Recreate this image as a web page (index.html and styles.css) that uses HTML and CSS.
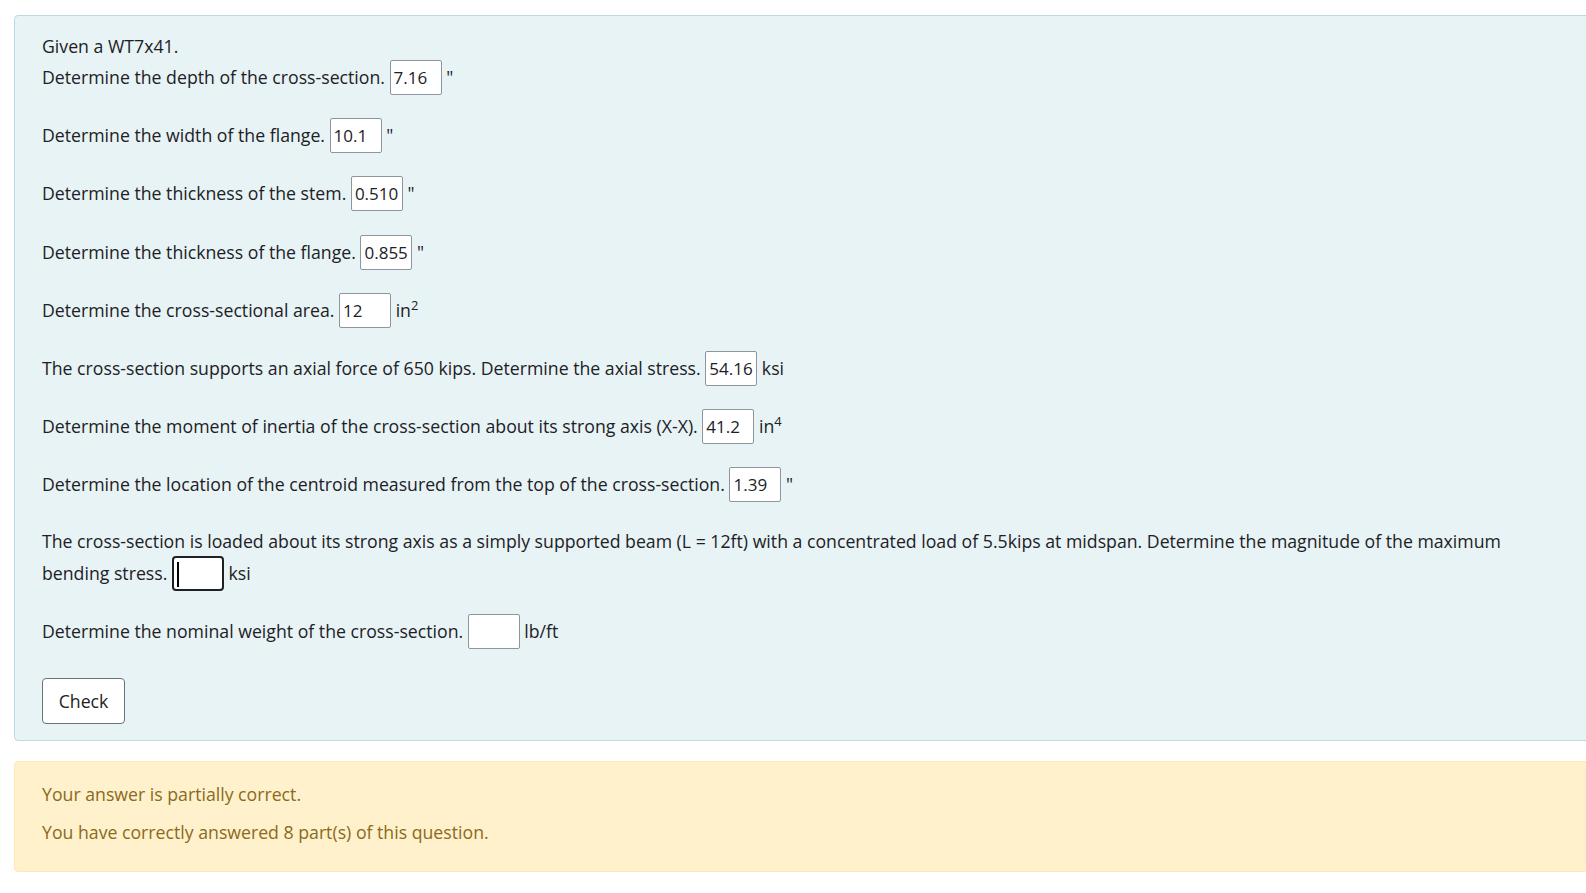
FILE: index.html
```html
<!DOCTYPE html>
<html lang="en">
<head>
    <meta charset="UTF-8">
    <title>Question</title>
    <link rel="stylesheet" href="styles.css">
</head>
<body>
    <div class="que">
        <div class="formulation">
            <p class="intro">Given a WT7x41.</p>
            <p class="part">Determine the depth of the cross-section. <input class="answer" type="text" value="7.16"> <span class="unit">"</span></p>
            <p class="part">Determine the width of the flange. <input class="answer" type="text" value="10.1"> <span class="unit">"</span></p>
            <p class="part">Determine the thickness of the stem. <input class="answer" type="text" value="0.510"> <span class="unit">"</span></p>
            <p class="part">Determine the thickness of the flange. <input class="answer" type="text" value="0.855"> <span class="unit">"</span></p>
            <p class="part">Determine the cross-sectional area. <input class="answer" type="text" value="12"> in<sup>2</sup></p>
            <p class="part">The cross-section supports an axial force of 650 kips. Determine the axial stress. <input class="answer" type="text" value="54.16"> ksi</p>
            <p class="part">Determine the moment of inertia of the cross-section about its strong axis (X-X). <input class="answer" type="text" value="41.2"> in<sup>4</sup></p>
            <p class="part">Determine the location of the centroid measured from the top of the cross-section. <input class="answer" type="text" value="1.39"> <span class="unit">"</span></p>
            <p class="part">The cross-section is loaded about its strong axis as a simply supported beam (L = 12ft) with a concentrated load of 5.5kips at midspan. Determine the magnitude of the maximum bending stress. <span class="focus-wrap"><input class="answer focused" type="text" value=""></span> ksi</p>
            <p class="part">Determine the nominal weight of the cross-section. <input class="answer" type="text" value=""> lb/ft</p>
            <div class="actions">
                <button class="btn-check" type="button">Check</button>
            </div>
        </div>
        <div class="outcome">
            <p>Your answer is partially correct.</p>
            <p>You have correctly answered 8 part(s) of this question.</p>
        </div>
    </div>
</body>
</html>
```

FILE: styles.css
```css
body {
    margin: 0;
    padding: 15px 0 0 14px;
    font-family: "Open Sans", "Noto Sans", sans-serif;
    font-size: 17.7px;
    color: #1d2125;
    background-color: #fff;
    overflow: hidden;
}

p {
    margin: 0;
}

.que {
    width: 1620px;
}

.formulation {
    background-color: #e7f3f5;
    border: 1px solid #b8dce2;
    border-radius: 4px;
    padding: 16px 27px 16px 27px;
    color: #1d2125;
}

.intro {
    line-height: 28px;
}

.part {
    line-height: 30px;
    margin-bottom: 23.2px;
    max-width: 1480px;
}

.answer {
    width: 52px;
    height: 35px;
    box-sizing: border-box;
    padding: 0 3px;
    border: 1px solid #8f959e;
    border-radius: 2px;
    background: #fff;
    font-family: inherit;
    font-size: 17px;
    color: #1d2125;
    outline: none;
}

.answer.focused {
    border: 2px solid #1d2125;
    border-radius: 4px;
}

.focus-wrap {
    position: relative;
    display: inline-block;
}

/* fake text caret */
.focus-wrap::after {
    content: "";
    position: absolute;
    left: 5px;
    bottom: 4px;
    width: 2px;
    height: 25px;
    background: #000;
}

sup {
    font-size: 13px;
    line-height: 0;
}

.actions {
    padding-top: 6px;
}

.btn-check {
    width: 83px;
    height: 46px;
    border: 1px solid #6a737b;
    border-radius: 4px;
    background: #fff;
    font-family: inherit;
    font-size: 17.7px;
    color: #1d2125;
    cursor: pointer;
}

.outcome {
    margin-top: 20px;
    background-color: #fff1cc;
    border: 1px solid #fde9b6;
    border-radius: 4px;
    padding: 18px 27px 25px 27px;
    color: #8a6a1c;
}

.outcome p {
    line-height: 28px;
}

.outcome p + p {
    margin-top: 10px;
}
```
